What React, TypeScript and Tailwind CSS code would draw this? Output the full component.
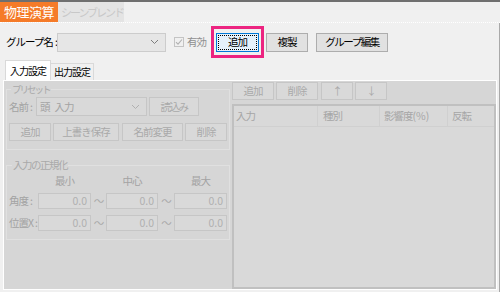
const btnOff =
  "flex items-center justify-center h-[18px] bg-[#d9d9d9] border border-[#c6c6c6] text-[#a9a9a9]";
const inputOff =
  "h-[16px] bg-[#d9d9d9] border border-[#c6c6c6] text-[#b0b0b0] tracking-normal flex items-center justify-end pr-[3px]";

function Chevron({ color }: { color: string }) {
  return (
    <svg width="9" height="6" viewBox="0 0 9 6" fill="none">
      <path d="M1 1l3.5 3.5L8 1" stroke={color} strokeWidth="1" />
    </svg>
  );
}

function NormRow({ label }: { label: string }) {
  return (
    <>
      <span className="text-[#a3a3a3]">
        {label}
        <span className="ml-[2px] tracking-normal">:</span>
      </span>
      <div className={inputOff}>0.0</div>
      <span className="text-center text-[#a9a9a9]">～</span>
      <div className={inputOff}>0.0</div>
      <span className="text-center text-[#a9a9a9]">～</span>
      <div className={inputOff}>0.0</div>
    </>
  );
}

export default function App() {
  return (
    <div className="w-[500px] h-[292px] bg-[#f0f0f0] flex flex-col overflow-hidden whitespace-nowrap font-['Noto_Sans_CJK_JP','Liberation_Sans',sans-serif] text-[10.5px] tracking-[-1px] leading-[12px] text-black">
      {/* window edge */}
      <div className="h-[2px] bg-[#6f6f6f]" />

      {/* mode tabs */}
      <div className="h-[20px] flex">
        <div className="w-[58px] bg-[#f57b29] text-white text-[13px] tracking-[-0.5px] flex items-center justify-center">
          物理演算
        </div>
        <div className="w-[66px] bg-[#e4e4e4] text-[#c8c8c8] text-[11px] tracking-[-2px] flex items-center pl-[3px]">
          シーンブレンド
        </div>
      </div>
      <div className="border-t border-dotted border-white" />

      <div className="flex-1 flex flex-col border-r border-[#a9a9a9]">
        {/* group row */}
        <div className="mt-[3px] h-[32px] flex items-center pl-[6px]">
          <span className="w-[51px]">
            グループ名<span className="ml-[2px] tracking-normal">:</span>
          </span>
          <div className="w-[109px] h-[19px] bg-[#e6e6e6] border border-[#cccccc] flex items-center justify-end pr-[6px]">
            <Chevron color="#7d7d7d" />
          </div>
          <div className="ml-[8px] w-[10px] h-[10px] border border-[#c4c4c4] bg-[#f0f0f0] flex items-center justify-center">
            <svg width="8" height="8" viewBox="0 0 8 8" fill="none">
              <path d="M1 4.2l2 2L7 1.5" stroke="#b0b0b0" strokeWidth="1.1" />
            </svg>
          </div>
          <span className="ml-[3px] text-[#8f8f8f]">有効</span>
          <div className="ml-[5px] w-[53px] h-[32px] border-[3px] border-[#ec2480] flex items-center justify-center">
            <div className="w-[43px] h-[19px] bg-[#e5f1fb] border border-[#0078d7] p-[1px]">
              <div className="w-full h-full border border-dotted border-black flex items-center justify-center">
                追加
              </div>
            </div>
          </div>
          <div className="ml-[2px] w-[42px] h-[19px] bg-[#e1e1e1] border border-[#adadad] flex items-center justify-center">
            複製
          </div>
          <div className="ml-[8px] w-[72px] h-[19px] bg-[#e1e1e1] border border-[#adadad] flex items-center justify-center tracking-[-1.5px]">
            グループ編集
          </div>
        </div>

        {/* setting tabs */}
        <div className="mt-[2px] h-[20px] flex items-end pl-[5px]">
          <div className="w-[46px] h-[20px] bg-white border border-b-0 border-[#d9d9d9] flex items-center justify-center text-[10px]">
            入力設定
          </div>
          <div className="w-[43px] h-[17px] bg-[#f0f0f0] border border-b-0 border-l-0 border-[#d9d9d9] flex items-center justify-center text-[10px]">
            出力設定
          </div>
        </div>

        {/* tab page */}
        <div className="flex-1 ml-[3px] mr-[2px] mb-[2px] bg-white p-[1px] flex">
          <div className="flex-1 bg-[#d6d6d6] flex">
            {/* left column */}
            <div className="w-[227px] pl-[2px] pt-[2px] flex flex-col">
              <fieldset className="w-[224px] border border-[#e0e0e0] px-[2px] pb-[8px]">
                <legend className="ml-[2px] px-[1px] text-[#a9a9a9] text-[9.5px] tracking-[-2px] leading-[12px]">プリセット</legend>
                <div className="mt-[2px] flex items-center">
                  <span className="w-[27px] text-[#a3a3a3]">
                    名前<span className="ml-[2px] tracking-normal">:</span>
                  </span>
                  <div className="w-[111px] h-[19px] bg-[#d9d9d9] border border-[#c6c6c6] flex items-center justify-between pl-[3px] pr-[6px] text-[#a3a3a3]">
                    <span>
                      頭<span className="ml-[5px]">入力</span>
                    </span>
                    <Chevron color="#b0b0b0" />
                  </div>
                  <div className={`${btnOff} ml-[2px] w-[50px] h-[19px] tracking-[-1.5px]`}>読込み</div>
                </div>
                <div className="mt-[7px] flex items-center gap-[2px]">
                  <div className={`${btnOff} w-[42px]`}>追加</div>
                  <div className={`${btnOff} w-[66px]`}>上書き保存</div>
                  <div className={`${btnOff} ml-[1px] w-[61px]`}>名前変更</div>
                  <div className={`${btnOff} w-[42px]`}>削除</div>
                </div>
              </fieldset>

              <fieldset className="mt-[9px] w-[224px] border border-[#e0e0e0] pl-[2px] pb-[8px]">
                <legend className="ml-[3px] px-[1px] text-[#a9a9a9] tracking-[-1.5px] leading-[12px]">入力の正規化</legend>
                <div className="grid grid-cols-[29px_53px_15px_52px_16px_53px] items-center gap-y-[6px]">
                  <span />
                  <span className="mt-[4px] text-center text-[#a3a3a3]">最小</span>
                  <span />
                  <span className="mt-[4px] text-center text-[#a3a3a3]">中心</span>
                  <span />
                  <span className="mt-[4px] text-center text-[#a3a3a3]">最大</span>
                  <NormRow label="角度" />
                  <NormRow label="位置X" />
                </div>
              </fieldset>
            </div>

            {/* right column */}
            <div className="flex-1 pt-[1px] pl-[1px] flex flex-col">
              <div className="flex items-center">
                <div className={`${btnOff} w-[42px]`}>追加</div>
                <div className={`${btnOff} ml-[2px] w-[42px]`}>削除</div>
                <div className={`${btnOff} ml-[3px] w-[32px]`}>↑</div>
                <div className={`${btnOff} ml-[2px] w-[32px]`}>↓</div>
              </div>
              <div className="mt-[4px] flex-1 border-2 border-[#c0c0c0] bg-[#d9d9d9] flex flex-col">
                <div className="h-[21px] flex border-b border-[#d0d0d0] text-[#a6a6a6]">
                  <div className="w-[84px] pl-[2px] flex items-center border-r border-[#d0d0d0]">入力</div>
                  <div className="w-[62px] pl-[5px] flex items-center border-r border-[#d0d0d0]">種別</div>
                  <div className="w-[68px] pl-[4px] flex items-center border-r border-[#d0d0d0]">
                    影響度<span className="tracking-normal">(%)</span>
                  </div>
                  <div className="flex-1 pl-[4px] flex items-center">反転</div>
                </div>
              </div>
            </div>
          </div>
        </div>
      </div>
    </div>
  );
}
